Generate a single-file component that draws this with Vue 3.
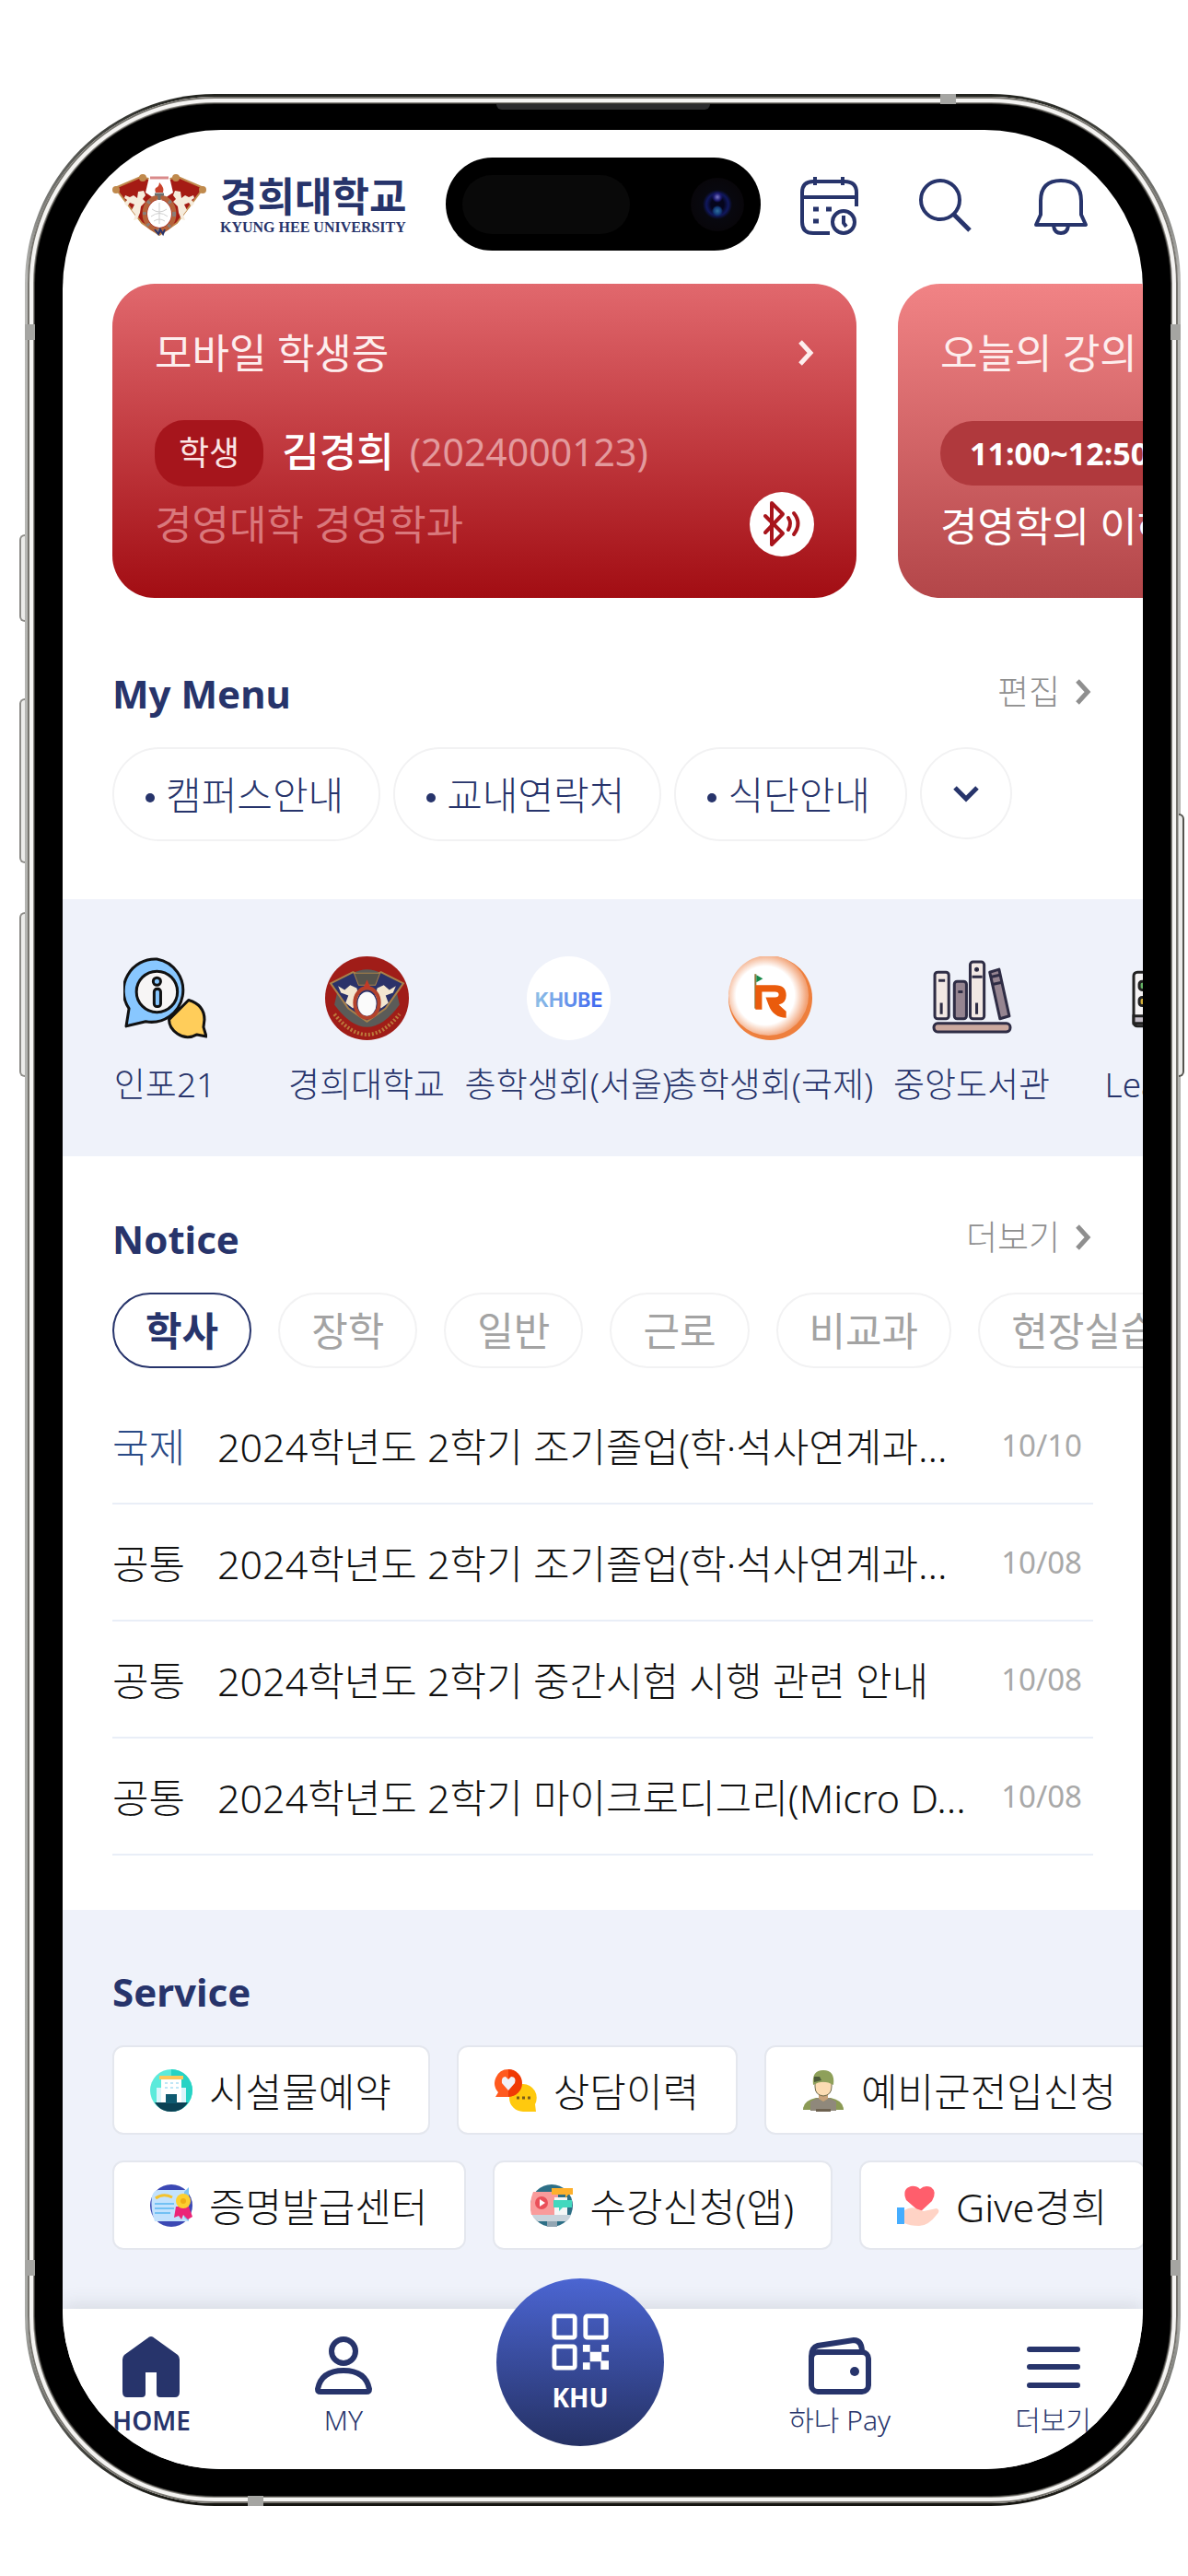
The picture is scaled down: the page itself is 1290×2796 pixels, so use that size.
<template>
  <div class="page">
    <div class="phone">
      <span class="side-btn mute"></span>
      <span class="side-btn vol-up"></span>
      <span class="side-btn vol-down"></span>
      <span class="side-btn power"></span>
      <div class="rim">
        <span class="band top"></span>
        <span class="band bottom"></span>
        <span class="band left high"></span>
        <span class="band left low"></span>
        <span class="band right high"></span>
        <span class="band right low"></span>
        <div class="bezel">
          <span class="speaker"></span>
          <div class="screen">
            <div class="island">
              <span class="island-sensor"></span>
              <span class="island-camera"></span>
            </div>

            <header class="header">
              <a href="#" class="logo">
                <svg class="logo-mark" viewBox="0 0 102 68">
                  <path d="M3 15 L31 3 L51 8 L71 3 L99 15 L70 53 L51 66 L32 53 Z" fill="#a51b14" stroke="#c08a4d" stroke-width="2" stroke-linejoin="round" />
                  <path d="M40 3 H62 L66 20 L51 30 L36 20 Z" fill="#fff" />
                  <path d="M41 4 H61" stroke="#d98a8a" stroke-width="3" />
                  <circle cx="33" cy="4" r="4" fill="#c08a4d" />
                  <circle cx="69" cy="4" r="4" fill="#c08a4d" />
                  <circle cx="4" cy="17" r="4" fill="#c08a4d" />
                  <circle cx="98" cy="17" r="4" fill="#c08a4d" />
                  <path d="M14 23 l5 2 4-2 4 3 1-7 6-1 2 5-3 4 3 3-5 5-1 7-3 7-4 1 2-6-4-5 3-6-5-2-3 4-3-3 3-4-3-2z" fill="#f6ecdc" />
                  <path d="M88 23 l-5 2-4-2-4 3-1-7-6-1-2 5 3 4-3 3 5 5 1 7 3 7 4 1-2-6 4-5-3-6 5-2 3 4 3-3-3-4 3-2z" fill="#f6ecdc" />
                  <ellipse cx="51" cy="43" rx="16" ry="18" fill="none" stroke="#b5623a" stroke-width="5" />
                  <ellipse cx="51" cy="43" rx="16" ry="18" fill="none" stroke="#8a7d78" stroke-width="4" stroke-dasharray="3 10" />
                  <ellipse cx="51" cy="43" rx="13" ry="15" fill="#fff" />
                  <path d="M51 31 V54 M43 38 Q51 44 59 38 M42 46 Q51 39 60 46 M45 51 Q51 47 57 51" stroke="#cfcfcf" stroke-width="1" fill="none" />
                  <path d="M51 9 q6 6 4 11 h-8 q-2-5 2-6 q2-2 2-5z" fill="#c9422c" />
                  <path d="M46 22 h10 M51 22 v6" stroke="#6d6f6c" stroke-width="3" />
                  <path d="M46 60 l4 5 2-5 3 5 2-5" stroke="#27346b" stroke-width="2" fill="none" />
                </svg>
                <span class="logo-text">
                  <strong>경희대학교</strong>
                  <small>KYUNG HEE UNIVERSITY</small>
                </span>
              </a>
              <div class="header-actions">
                <button class="icon-btn" aria-label="일정">
                  <svg viewBox="0 0 66 66" class="line-icon">
                    <path d="M34 63 H16 Q4 63 4 51 V19 Q4 7 16 7 H50 Q63 7 63 19 V34" />
                    <path d="M4 24 H63 M18 2 V11 M48 2 V11" />
                    <path d="M16 37 h6 M30 37 h6 M16 50 h6" stroke-width="5" />
                    <circle cx="49" cy="51" r="12" />
                    <path d="M49 44 v8 l3 4" />
                  </svg>
                </button>
                <button class="icon-btn" aria-label="검색">
                  <svg viewBox="0 0 66 66" class="line-icon">
                    <circle cx="28" cy="27" r="21" />
                    <path d="M43 43 L60 60" stroke-width="5" />
                  </svg>
                </button>
                <button class="icon-btn" aria-label="알림">
                  <svg viewBox="0 0 66 66" class="line-icon">
                    <path d="M6 54 L11 43 V28 Q11 6 33 6 Q55 6 55 28 V43 L60 54 Z" />
                    <path d="M25 55 Q26 63 33 63 Q40 63 41 55" />
                  </svg>
                </button>
              </div>
            </header>

            <section class="cards">
              <article class="card id-card">
                <a href="#" class="card-title">
                  <span>모바일 학생증</span>
                  <svg class="chevron" viewBox="0 0 18 30"><path d="M3 3 L14 15 L3 27" /></svg>
                </a>
                <div class="card-row">
                  <span class="role">학생</span>
                  <span class="student">김경희</span>
                  <span class="student-no">(2024000123)</span>
                </div>
                <div class="card-foot">
                  <span class="dept">경영대학 경영학과</span>
                  <button class="bt-btn" aria-label="블루투스">
                    <svg viewBox="0 0 70 70">
                      <path d="M17 26 L36 45 L24 57 V12 L36 24 L17 44" />
                      <path d="M42 28 Q46 34 42 41 M48 23 Q57 34 48 46" />
                    </svg>
                  </button>
                </div>
              </article>
              <article class="card lecture-card">
                <a href="#" class="card-title"><span>오늘의 강의</span></a>
                <div class="card-row">
                  <span class="time">11:00~12:50</span>
                </div>
                <div class="card-foot"><span>경영학의 이해</span></div>
              </article>
            </section>

            <section class="section my-menu">
              <div class="section-head">
                <h2>My Menu</h2>
                <a href="#" class="more">편집
                  <svg class="chevron" viewBox="0 0 18 30"><path d="M3 3 L14 15 L3 27" /></svg>
                </a>
              </div>
              <div class="menu-pills">
                <button v-for="m in menus" :key="m" class="menu-pill">
                  <i class="dot"></i><span>{{ m }}</span>
                </button>
                <button class="menu-open" aria-label="펼치기">
                  <svg viewBox="0 0 30 20"><path d="M3 4 L15 16 L27 4" /></svg>
                </button>
              </div>
            </section>

            <nav class="shortcuts">
              <a v-for="s in shortcuts" :key="s.name" href="#" class="shortcut">
                <svg v-if="s.icon === 'info'" viewBox="0 0 90 90">
                  <path d="M70 47 Q87 52 87 68 L86 76 L89 86 L79 84 Q68 90 58 83 Q49 77 49 68 Z" fill="#ffcd5a" stroke="#111" stroke-width="3" stroke-linejoin="round" />
                  <path d="M36 3 A34 34 0 1 1 24 70 L3 75 L6 56 A34 34 0 0 1 36 3 Z" fill="#88c7ff" stroke="#111" stroke-width="3" stroke-linejoin="round" />
                  <circle cx="36" cy="38" r="22" fill="#f7f5f5" stroke="#111" stroke-width="3" />
                  <circle cx="36" cy="27" r="4" fill="#88c7ff" stroke="#111" stroke-width="3" />
                  <rect x="33" y="35" width="7" height="19" rx="3" fill="#88c7ff" stroke="#111" stroke-width="3" />
                </svg>
                <svg v-else-if="s.icon === 'khu'" viewBox="0 0 90 90">
                  <circle cx="45" cy="45" r="45" fill="#a01d18" />
                  <path d="M15 30 Q45 -2 75 30 L80 52 Q45 100 10 52 Z" fill="#5b5b58" />
                  <path d="M6 29 L30 17 L45 25 L60 17 L84 29 L65 56 L45 70 L25 56 Z" fill="#2b3269" stroke="#a9814a" stroke-width="2" />
                  <path d="M31 18 H59 L54 31 H36 Z" fill="#55534c" stroke="#a9814a" stroke-width="1" />
                  <path d="M14 32 l7 4 6-5 7 3 2 8-6 14-8-6 3-8-8-3z M76 32 l-7 4-6-5-7 3-2 8 6 14 8-6-3-8 8-3z" fill="#f3e7d0" />
                  <ellipse cx="45" cy="50" rx="13" ry="16" fill="none" stroke="#b3422c" stroke-width="4" />
                  <ellipse cx="45" cy="51" rx="10" ry="13" fill="#fbfbfb" />
                  <path d="M45 25 l4 9 h-8z" fill="#c23a26" />
                  <path d="M10 62 Q45 106 80 62" fill="none" stroke="#bb7a3c" stroke-width="4" stroke-dasharray="2 2" />
                </svg>
                <svg v-else-if="s.icon === 'khube'" viewBox="0 0 90 90">
                  <defs>
                    <linearGradient id="khube" x1="0" x2="1" y1="0" y2="0">
                      <stop offset="0" stop-color="#8fc0e6" />
                      <stop offset="1" stop-color="#3a62f0" />
                    </linearGradient>
                  </defs>
                  <circle cx="45" cy="45" r="45" fill="#fff" />
                  <text x="45" y="54" text-anchor="middle" class="khube-text" fill="url(#khube)">KHUBE</text>
                </svg>
                <svg v-else-if="s.icon === 'council'" viewBox="0 0 90 90">
                  <defs>
                    <radialGradient id="ring" cx="0.46" cy="0.5" r="0.52">
                      <stop offset="0.7" stop-color="#fff" />
                      <stop offset="1" stop-color="#f2a479" />
                    </radialGradient>
                  </defs>
                  <circle cx="45" cy="45" r="45" fill="#ee7f3d" />
                  <circle cx="43" cy="42" r="43" fill="url(#ring)" />
                  <path d="M29 19 V56" stroke="#8d7a3d" stroke-width="2" />
                  <path d="M30 20 l7 4-7 4z" fill="#16884a" />
                  <path d="M29 57 V31 H50 Q62 31 62 42 Q62 50 54 52 L62 59 V66 Q48 66 43 52 L40 44 H50 Q54 44 54 41 Q54 38 50 38 H36 V57 Z" fill="#ea5b0c" />
                </svg>
                <svg v-else-if="s.icon === 'books'" viewBox="0 0 90 90">
                  <g stroke="#2f2d45" stroke-width="3" stroke-linejoin="round">
                    <rect x="5" y="17" width="15" height="50" rx="3" fill="#f2e8e4" />
                    <rect x="26" y="27" width="13" height="40" rx="3" fill="#968591" />
                    <rect x="43" y="6" width="15" height="61" rx="3" fill="#f2e8e4" />
                    <path d="M64 17 L74 14 L85 64 L75 67 Z" fill="#968591" />
                    <rect x="4" y="72" width="82" height="9" rx="4" fill="#cba99f" />
                    <path d="M9 26 h7 M12 50 v12 M30 38 h5 M45 22 h11 M50 50 v12 M66 22 l9-2 M68 30 l9-2" fill="none" />
                    <circle cx="50" cy="14" r="1" />
                  </g>
                </svg>
                <svg v-else viewBox="0 0 90 90">
                  <g stroke="#222" stroke-width="3">
                    <rect x="2" y="17" width="86" height="58" rx="4" fill="#f5f3f4" />
                    <path d="M2 64 H88 V72 H2 Z" fill="#c5bec8" />
                    <rect x="8" y="27" width="12" height="9" rx="3" fill="#65b365" />
                    <rect x="8" y="44" width="12" height="9" rx="3" fill="#d6b13c" />
                  </g>
                </svg>
                <span>{{ s.name }}</span>
              </a>
            </nav>

            <section class="section notice">
              <div class="section-head">
                <h2>Notice</h2>
                <a href="#" class="more">더보기
                  <svg class="chevron" viewBox="0 0 18 30"><path d="M3 3 L14 15 L3 27" /></svg>
                </a>
              </div>
              <div class="tabs">
                <button
                  v-for="t in tabs"
                  :key="t"
                  class="tab"
                  :class="{ active: t === currentTab }"
                  @click="currentTab = t"
                >{{ t }}</button>
              </div>
              <ul class="notice-list">
                <li v-for="(n, i) in notices" :key="i">
                  <a href="#" class="notice-row">
                    <span class="kind" :class="{ intl: n.kind === '국제' }">{{ n.kind }}</span>
                    <span class="subject">{{ n.title }}</span>
                    <span class="date">{{ n.date }}</span>
                  </a>
                </li>
              </ul>
            </section>

            <section class="service">
              <h2>Service</h2>
              <div v-for="(row, r) in services" :key="r" class="service-row">
                <a v-for="s in row" :key="s.name" href="#" class="service-item">
                  <svg v-if="s.icon === 'building'" viewBox="0 0 46 46">
                    <circle cx="23" cy="23" r="23" fill="#5ceadb" />
                    <path d="M23 0 A23 23 0 0 1 23 46Z" fill="#26d3c5" />
                    <path d="M5 36 H41 Q35 46 23 46 Q11 46 5 36Z" fill="#0b4154" />
                    <path d="M7 20 H39 V36 H7Z" fill="#d9f5fb" />
                    <path d="M12 10 H34 V36 H12Z" fill="#fff" />
                    <path d="M10 7 H36 V11 H10Z" fill="#fcc85c" />
                    <path d="M17 27 H29 V37 H17Z" fill="#0f5a70" />
                    <path d="M16 15 h15 M16 20 h15" stroke="#bfe6f6" stroke-width="2" stroke-dasharray="3 3" />
                  </svg>
                  <svg v-else-if="s.icon === 'counsel'" viewBox="0 0 46 46">
                    <path d="M31 16 A15 15 0 0 1 44 38 L45 46 H31 A15 15 0 0 1 31 16Z" fill="#ffc90e" />
                    <path d="M15 0 A15 15 0 1 1 13 30 H1 L4 25 A15 15 0 0 1 15 0Z" fill="#ff5a1f" />
                    <path d="M15 0 A15 15 0 0 1 15 30Z" fill="#f03a05" />
                    <path d="M15 23 L8 15 Q7 8 12 8 L15 11 L18 8 Q24 8 22 15Z" fill="#f1f2f8" />
                    <path d="M24 31 h15" stroke="#7b5c18" stroke-width="3" stroke-dasharray="3 3" />
                  </svg>
                  <svg v-else-if="s.icon === 'soldier'" viewBox="0 0 46 46">
                    <path d="M1 44 Q1 34 15 31 H31 Q45 34 45 44Z" fill="#8b9a55" />
                    <path d="M9 45 V35 L17 31 L23 35 L29 31 L37 35 V45Z" fill="#8f887b" />
                    <path d="M18 25 H28 V32 L23 35 L18 32Z" fill="#c9a27a" />
                    <path d="M14 13 H32 V19 Q32 28 23 29 Q14 28 14 19Z" fill="#fcdcb3" stroke="#6f6b4b" stroke-width="1" />
                    <path d="M12 17 Q10 1 23 1 Q36 1 34 17 Q23 10 12 17Z" fill="#8ea05a" />
                    <path d="M13 8 l6 0 2 4-8 2z" fill="#4c5a38" />
                    <path d="M15 43 H31 V46 H15Z" fill="#6e6250" />
                  </svg>
                  <svg v-else-if="s.icon === 'cert'" viewBox="0 0 46 46">
                    <circle cx="23" cy="23" r="23" fill="#3b48b4" />
                    <path d="M2 13 Q4 6 9 6 H41 V40 H5 Q0 27 2 13Z" fill="#c3e2fd" />
                    <path d="M37 8 L42 3 V40 L37 36Z" fill="#7cc4f4" />
                    <path d="M5 21 H26 M5 26 H26 M5 31 H22" stroke="#72c1f4" stroke-width="2" />
                    <path d="M6 15 Q14 9 24 14" stroke="#f4c22c" stroke-width="3" fill="none" />
                    <path d="M28 24 L26 36 L31 34 L34 38 L36 33 L41 38 L46 35 L42 24Z" fill="#ec2477" />
                    <circle cx="36" cy="18" r="8" fill="#fdd02f" />
                    <circle cx="36" cy="18" r="3" fill="#efae16" />
                  </svg>
                  <svg v-else-if="s.icon === 'course'" viewBox="0 0 46 46">
                    <circle cx="23" cy="23" r="23" fill="#2d6f86" />
                    <path d="M3 8 H30 V33 H1 Q-2 20 3 8Z" fill="#f99b9b" />
                    <path d="M2 33 H44 Q42 39 38 40 H8 Q3 37 2 33Z" fill="#c9d4dc" />
                    <path d="M18 40 H29 V46 H18Z" fill="#93a6b3" />
                    <circle cx="12" cy="20" r="7" fill="#ea4f59" />
                    <path d="M10 16 l6 4-6 4z" fill="#fff" />
                    <path d="M26 14 H40 V33 H26Z" fill="#f5f7f7" />
                    <path d="M23 4 H46 V11 H41 L38 15 V11 H23Z" fill="#fdb02c" />
                    <path d="M25 17 H45 V25 H35 L31 29 V25 H25Z" fill="#42d8be" />
                  </svg>
                  <svg v-else viewBox="0 0 46 46">
                    <path d="M25 30 L10 17 Q5 5 15 2 Q21 1 25 5 Q30 0 37 3 Q44 8 38 18Z" fill="#ff5e6c" />
                    <path d="M0 25 H8 V43 H0Z" fill="#45adff" />
                    <path d="M8 28 Q15 24 20 26 L29 29 L43 26 Q48 28 43 33 Q34 45 24 45 Q14 45 8 42Z" fill="#ffd3c5" />
                  </svg>
                  <span>{{ s.name }}</span>
                </a>
              </div>
            </section>

            <nav class="tabbar">
              <a href="#" class="tabbar-item current">
                <svg viewBox="0 0 62 66">
                  <path d="M31 0 Q33 0 35 2 L60 20 Q62 22 62 25 V60 Q62 66 57 66 H41 Q37 66 37 62 V39 H25 V62 Q25 66 21 66 H5 Q0 66 0 60 V25 Q0 22 2 20 L27 2 Q29 0 31 0Z" fill="#27346b" />
                </svg>
                <span>HOME</span>
              </a>
              <a href="#" class="tabbar-item">
                <svg viewBox="0 0 62 66" class="nav-line">
                  <circle cx="31" cy="16" r="13" />
                  <path d="M3 57 Q7 37 31 37 Q55 37 59 57 Q59 60 56 60 H6 Q3 60 3 57Z" />
                </svg>
                <span>MY</span>
              </a>
              <button class="khu-btn">
                <svg viewBox="0 0 64 64">
                  <g fill="none" stroke="#fff" stroke-width="5">
                    <rect x="3" y="3" width="23" height="24" rx="2" />
                    <rect x="38" y="3" width="23" height="24" rx="2" />
                    <rect x="3" y="37" width="23" height="24" rx="2" />
                  </g>
                  <path d="M35 35h8v8h-8z M56 35h8v8h-8z M43 43h13v11h-13z M35 55h8v8h-8z M55 53h9v10h-9z" fill="#fff" />
                </svg>
                <span>KHU</span>
              </button>
              <a href="#" class="tabbar-item">
                <svg viewBox="0 0 68 66" class="nav-line wide">
                  <rect x="3" y="17" width="62" height="43" rx="7" />
                  <path d="M3 22 Q3 12 10 10 L49 4 Q58 4 58 17" />
                  <circle cx="50" cy="38" r="5" class="fill" />
                </svg>
                <span>하나 Pay</span>
              </a>
              <a href="#" class="tabbar-item">
                <svg viewBox="0 0 62 66" class="nav-line">
                  <path d="M5 14 H57 M5 33 H57 M5 53 H57" />
                </svg>
                <span>더보기</span>
              </a>
            </nav>
          </div>
        </div>
      </div>
    </div>
  </div>
</template>

<script setup>
import { ref } from 'vue'

const menus = ['캠퍼스안내', '교내연락처', '식단안내']

const shortcuts = [
  { name: '인포21', icon: 'info' },
  { name: '경희대학교', icon: 'khu' },
  { name: '총학생회(서울)', icon: 'khube' },
  { name: '총학생회(국제)', icon: 'council' },
  { name: '중앙도서관', icon: 'books' },
  { name: 'Learning', icon: 'learning' }
]

const tabs = ['학사', '장학', '일반', '근로', '비교과', '현장실습']
const currentTab = ref('학사')

const notices = ref([
  { kind: '국제', title: '2024학년도 2학기 조기졸업(학·석사연계과...', date: '10/10' },
  { kind: '공통', title: '2024학년도 2학기 조기졸업(학·석사연계과...', date: '10/08' },
  { kind: '공통', title: '2024학년도 2학기 중간시험 시행 관련 안내', date: '10/08' },
  { kind: '공통', title: '2024학년도 2학기 마이크로디그리(Micro D...', date: '10/08' }
])

const services = [
  [
    { name: '시설물예약', icon: 'building' },
    { name: '상담이력', icon: 'counsel' },
    { name: '예비군전입신청', icon: 'soldier' }
  ],
  [
    { name: '증명발급센터', icon: 'cert' },
    { name: '수강신청(앱)', icon: 'course' },
    { name: 'Give경희', icon: 'give' }
  ]
]
</script>

<style>
body {
  background: #fff;
}
</style>

<style scoped>
.page {
  padding: 102px 8px 76px 27px;
  font-family: "Noto Sans", "Noto Sans CJK KR", sans-serif;
  font-size: 43px;
  font-weight: 300;
  color: #27346b;
  overflow: hidden;
}
.page *,
.page {
  box-sizing: border-box;
}
a {
  color: inherit;
  text-decoration: none;
}
button {
  font: inherit;
  color: inherit;
  background: none;
  border: none;
  padding: 0;
  cursor: pointer;
}
h2 {
  margin: 0;
  font-size: 42px;
  line-height: 60px;
  font-weight: 700;
}
svg {
  display: block;
  flex: none;
}

/* phone body */
.phone {
  position: relative;
  padding: 3px;
  border-radius: 206px;
  background: linear-gradient(#23241f, #b9b9b6 200px, #a9aaa6 calc(100% - 200px), #14140f);
}
.rim {
  position: relative;
  padding: 8px;
  border-radius: 203px;
  background: #3c3b37;
  box-shadow: inset 0 0 0 2px #77756f, inset 0 0 0 6px #f5f4f2, inset 0 0 0 7px #8b8984;
}
.bezel {
  position: relative;
  padding: 28px 30px 29px;
  border-radius: 195px;
  background: #000;
}
.screen {
  position: relative;
  overflow: hidden;
  border-radius: 172px;
  background: #fff;
}
.side-btn {
  position: absolute;
  width: 6px;
  left: -6px;
  border: 2px solid #8d8c88;
  border-right: none;
  border-radius: 6px 0 0 6px;
  background: #ececea;
}
.mute {
  top: 478px;
  height: 95px;
}
.vol-up {
  top: 656px;
  height: 179px;
}
.vol-down {
  top: 888px;
  height: 179px;
}
.power {
  top: 781px;
  height: 286px;
  left: auto;
  right: -4px;
  border: 2px solid #55544f;
  border-left: none;
  border-radius: 0 6px 6px 0;
}
.band {
  position: absolute;
  background: #a5a5a2;
}
.band.top,
.band.bottom {
  width: 17px;
  height: 11px;
}
.band.left,
.band.right {
  width: 11px;
  height: 17px;
}
.band.top {
  top: -3px;
  right: 241px;
}
.band.bottom {
  bottom: -3px;
  left: 239px;
}
.band.left {
  left: -3px;
}
.band.right {
  right: -3px;
}
.band.high {
  top: 247px;
}
.band.low {
  bottom: 247px;
}
.speaker {
  position: absolute;
  top: 0;
  left: 50%;
  width: 232px;
  height: 6px;
  margin-left: -116px;
  border-radius: 0 0 6px 6px;
  background: #2b2b2d;
}
.island {
  position: absolute;
  z-index: 2;
  top: 30px;
  left: 50%;
  width: 342px;
  height: 101px;
  margin-left: -171px;
  padding: 0 18px;
  border-radius: 51px;
  background: #000;
  display: flex;
  align-items: center;
  justify-content: space-between;
}
.island-sensor {
  width: 182px;
  height: 64px;
  border-radius: 32px;
  background: #090909;
}
.island-camera {
  width: 58px;
  height: 58px;
  border-radius: 50%;
  background: radial-gradient(circle at 50% 36%, #7b78c8 0, #1c1a6e 4px, transparent 6px), radial-gradient(circle at 50% 62%, #2f6f9c 0, #123a78 4px, transparent 6px), radial-gradient(circle, #05051c 7px, #10185e 12px, #08080f 16px, #08060a 29px);
}

/* header */
.header {
  display: flex;
  align-items: center;
  justify-content: space-between;
  padding: 48px 56px 51px 54px;
}
.logo {
  display: flex;
  align-items: center;
  gap: 15px;
}
.logo-mark {
  width: 102px;
  height: 68px;
}
.logo-text {
  display: flex;
  flex-direction: column;
}
.logo-text strong {
  font-size: 44px;
  line-height: 48px;
  font-weight: 700;
}
.logo-text small {
  font-family: "Liberation Serif", serif;
  font-size: 16px;
  line-height: 20px;
  font-weight: 700;
}
.header-actions {
  display: flex;
  gap: 60px;
}
.icon-btn,
.icon-btn svg {
  width: 66px;
  height: 66px;
}
.line-icon {
  fill: none;
  stroke: #27346b;
  stroke-width: 4;
  stroke-linejoin: round;
}

/* cards */
.cards {
  display: flex;
  gap: 45px;
  padding-left: 54px;
  overflow: hidden;
}
.card {
  flex: 0 0 808px;
  padding: 50px 46px 45px;
  border-radius: 46px;
  color: #fff;
  font-size: 44px;
  font-weight: 400;
}
.id-card {
  background: linear-gradient(#e1686d, #a20d13);
}
.lecture-card {
  background: linear-gradient(#f18385, #b34649);
}
.card-title {
  display: flex;
  align-items: center;
  justify-content: space-between;
  line-height: 50px;
  margin-bottom: 48px;
  color: #fdeeee;
}
.chevron {
  width: 18px;
  height: 30px;
  fill: none;
  stroke: currentColor;
  stroke-width: 5;
}
.card-row {
  display: flex;
  align-items: center;
  height: 72px;
}
.role {
  padding: 0 26px;
  border-radius: 32px;
  background: #a6151c;
  font-size: 36px;
  line-height: 72px;
  color: #fbe4e4;
}
.student {
  margin-left: 20px;
  font-weight: 500;
  line-height: 68px;
  padding-bottom: 4px;
}
.student-no {
  margin-left: 17px;
  font-size: 41px;
  line-height: 68px;
  padding-bottom: 4px;
  color: #e39a9d;
}
.card-foot {
  display: flex;
  align-items: center;
  justify-content: space-between;
  height: 70px;
  margin-top: 6px;
}
.dept {
  padding-bottom: 4px;
  color: #d9787c;
}
.bt-btn {
  width: 70px;
  height: 70px;
  border-radius: 50%;
  background: #fff;
}
.bt-btn svg {
  fill: none;
  stroke: #a8151c;
  stroke-width: 4;
  stroke-linejoin: round;
  stroke-linecap: round;
}
.time {
  padding: 0 32px;
  border-radius: 36px;
  background: #b0393d;
  font-size: 34px;
  line-height: 70px;
  font-weight: 700;
}

/* sections */
.section {
  padding: 0 54px;
}
.section-head {
  display: flex;
  align-items: center;
  justify-content: space-between;
  margin-bottom: 28px;
}
.more {
  display: flex;
  align-items: center;
  gap: 16px;
  padding-right: 2px;
  font-size: 37px;
  line-height: 56px;
  padding-bottom: 4px;
  color: #8f8f8f;
}
.my-menu {
  padding-top: 74px;
  padding-bottom: 63px;
}
.menu-pills {
  display: flex;
  gap: 14px;
}
.menu-pill {
  display: flex;
  align-items: center;
  gap: 12px;
  height: 102px;
  padding: 0 38px 4px 34px;
  border: 2px solid #f2f2f3;
  border-radius: 51px;
  font-size: 42px;
  white-space: nowrap;
}
.dot {
  width: 10px;
  height: 10px;
  margin-top: 12px;
  border-radius: 50%;
  background: #27346b;
}
.menu-open {
  display: flex;
  align-items: center;
  justify-content: center;
  width: 100px;
  height: 100px;
  border: 2px solid #f2f2f3;
  border-radius: 50%;
}
.menu-open svg {
  width: 30px;
  height: 20px;
  fill: none;
  stroke: #27346b;
  stroke-width: 5;
}

.shortcuts {
  display: flex;
  gap: 105px;
  padding: 62px 0 54px 54px;
  background: #eff2fa;
  overflow: hidden;
}
.shortcut {
  flex: 0 0 114px;
  min-width: 0;
  display: flex;
  flex-direction: column;
  align-items: center;
  gap: 24px;
  font-size: 37px;
  line-height: 48px;
  white-space: nowrap;
}
.shortcut svg {
  width: 91px;
  height: 91px;
}
.khube-text {
  font-family: Inter, "Noto Sans", sans-serif;
  font-size: 21px;
  font-weight: 700;
}

.notice {
  padding-top: 60px;
  padding-bottom: 59px;
}
.tabs {
  display: flex;
  gap: 29px;
  margin-right: -54px;
  overflow: hidden;
}
.tab {
  flex: none;
  height: 82px;
  padding: 0 34px 4px;
  border: 2px solid #f2f2f3;
  border-radius: 41px;
  color: #a3a3a3;
  font-weight: 400;
  white-space: nowrap;
}
.tab.active {
  border-color: #27346b;
  color: #27346b;
  font-weight: 700;
}
.notice-list {
  list-style: none;
  margin: 21px 0 0;
  padding: 0;
}
.notice-row {
  display: flex;
  align-items: center;
  height: 127px;
  padding-right: 12px;
  border-bottom: 2px solid #e9eef7;
  color: #111;
}
.kind {
  flex: 0 0 114px;
}
.kind.intl {
  color: #2a4a86;
}
.subject {
  flex: 1;
  min-width: 0;
  margin-right: 24px;
  overflow: hidden;
  white-space: nowrap;
  text-overflow: ellipsis;
}
.date {
  font-size: 33px;
  font-weight: 400;
  color: #a8a8a8;
}

.service {
  padding: 59px 0 64px 54px;
  background: #eff2fa;
}
.service-row {
  display: flex;
  gap: 29px;
  margin-top: 28px;
  overflow: hidden;
}
.service-item {
  flex: none;
  display: flex;
  align-items: center;
  gap: 18px;
  height: 97px;
  padding: 0 40px 0 39px;
  border: 2px solid #e4e7ee;
  border-radius: 12px;
  background: #fff;
  color: #111;
  white-space: nowrap;
}
.service-item svg {
  width: 46px;
  height: 46px;
}

/* bottom bar */
.tabbar {
  position: relative;
  display: flex;
  justify-content: space-between;
  height: 174px;
  padding: 0 56px 0 54px;
  background: #fff;
  box-shadow: 0 -4px 20px rgba(60, 70, 80, 0.14);
}
.tabbar-item {
  display: flex;
  flex-direction: column;
  align-items: center;
  gap: 5px;
  padding-top: 30px;
  font-size: 30px;
  line-height: 40px;
  white-space: nowrap;
}
.tabbar-item svg {
  width: 62px;
  height: 66px;
}
.tabbar-item svg.wide {
  width: 68px;
}
.tabbar-item.current {
  font-size: 28px;
  font-weight: 600;
}
.nav-line {
  fill: none;
  stroke: #27346b;
  stroke-width: 6;
  stroke-linecap: round;
}
.nav-line .fill {
  fill: #27346b;
  stroke: none;
}
.khu-btn {
  display: flex;
  flex-direction: column;
  align-items: center;
  width: 182px;
  height: 182px;
  margin-top: -33px;
  padding-top: 38px;
  border-radius: 50%;
  background: linear-gradient(#4b65d2, #253164);
  color: #fff;
  font-size: 28px;
  line-height: 40px;
  font-weight: 700;
}
.khu-btn svg {
  width: 62px;
  height: 62px;
  margin-bottom: 9px;
}
</style>
